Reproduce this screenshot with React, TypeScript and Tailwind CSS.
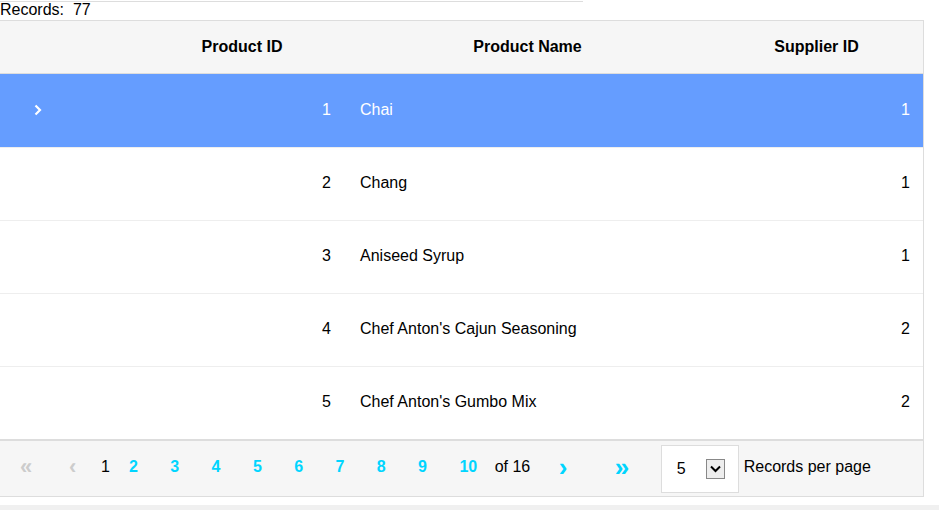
import React from 'react';

const products = [
  { id: 1, name: 'Chai', supplier: 1 },
  { id: 2, name: 'Chang', supplier: 1 },
  { id: 3, name: 'Aniseed Syrup', supplier: 1 },
  { id: 4, name: "Chef Anton's Cajun Seasoning", supplier: 2 },
  { id: 5, name: "Chef Anton's Gumbo Mix", supplier: 2 },
];

const pages = [2, 3, 4, 5, 6, 7, 8, 9, 10];

export default function App() {
  return (
    <div className="w-[939px] h-[510px] overflow-hidden bg-white text-black text-base font-['Liberation_Sans',Arial,sans-serif]">
      <div className="w-[583px] h-[2px] border-b border-[#dddddd]" />
      <div className="h-[18px] leading-[16px]">Records:&nbsp; 77</div>

      <div className="w-[924px] border border-l-0 border-[#dddddd]">
        {/* header */}
        <div className="flex h-[53px] items-center bg-[#f6f6f6] border-b border-[#dddddd] font-bold">
          <div className="w-[139px]" />
          <div className="w-[206px] text-center">Product ID</div>
          <div className="w-[365px] text-center">Product Name</div>
          <div className="flex-1 text-center">Supplier ID</div>
        </div>

        {products.map((p, i) => (
          <div
            key={p.id}
            className={
              i === 0
                ? 'flex h-[73px] items-center pb-[2px] bg-[#659dff] text-white'
                : 'flex h-[73px] items-center pb-[2px] border-t border-[#eeeeee]'
            }
          >
            <div className="w-[139px] pl-[32px]">
              {i === 0 && (
                <svg width="10" height="14" viewBox="0 0 10 14" className="ml-[1px]">
                  <path d="M2.5 2.5 L7 7 L2.5 11.5" fill="none" stroke="white" strokeWidth="2.2" />
                </svg>
              )}
            </div>
            <div className="w-[206px] text-right pr-[14px]">{p.id}</div>
            <div className="w-[365px] pl-[15px]">{p.name}</div>
            <div className="flex-1 text-right pr-[13px]">{p.supplier}</div>
          </div>
        ))}

        {/* pager */}
        <div className="flex h-[57px] items-center pb-[3px] bg-[#f6f6f6] border-t-2 border-[#dddddd]">
          <span className="ml-[20px] w-[49px] text-[22px] leading-none text-[#cccccc] font-bold">«</span>
          <span className="w-[32px] text-[22px] leading-none text-[#cccccc] font-bold">‹</span>
          <span className="w-[28px]">1</span>
          {pages.map((n) => (
            <span key={n} className="w-[41.3px] font-bold text-[#00d5ff] shrink-0">
              {n}
            </span>
          ))}
          <span className="ml-[-6px] w-[64px]">of 16</span>
          <span className="w-[56px] text-[26px] leading-none text-[#00d5ff] font-bold">›</span>
          <span className="w-[46px] text-[26px] leading-none text-[#00d5ff] font-bold">»</span>
          <div className="flex items-center w-[78px] h-[48px] mt-[3px] bg-white border border-[#dddddd]">
            <span className="ml-[15px] w-[29px]">5</span>
            <span className="flex items-center justify-center w-[19px] h-[20px] bg-[#eeeeee] border border-[#888888]">
              <svg width="11" height="8" viewBox="0 0 11 8">
                <path d="M1 1.5 L5.5 6 L10 1.5" fill="none" stroke="black" strokeWidth="2" />
              </svg>
            </span>
          </div>
          <span className="ml-[5px]">Records per page</span>
        </div>
      </div>

      <div className="mt-[8px] h-[6px] bg-[#f0f0f0]" />
    </div>
  );
}
